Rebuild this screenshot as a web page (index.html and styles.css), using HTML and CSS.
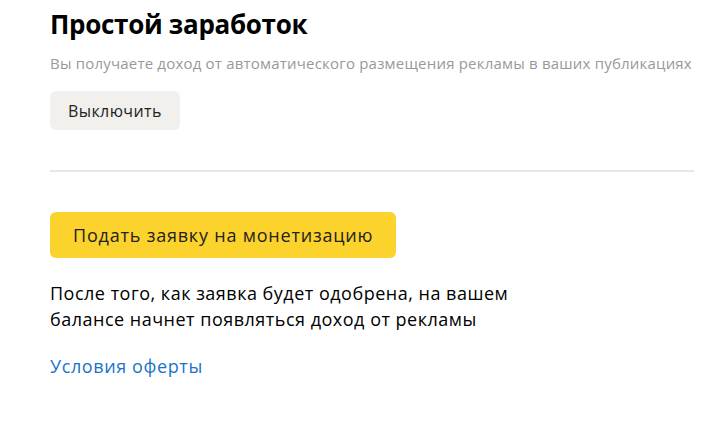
FILE: index.html
```html
<!DOCTYPE html>
<html>
    <head>
        <title>Простой заработок</title>
        <link rel="stylesheet" href="styles.css">
    </head>
    <body>
        <div class="page">
            <h1>Простой заработок</h1>
            <p class="hint">Вы получаете доход от автоматического размещения рекламы в ваших публикациях</p>
            <button class="btn btn-gray">Выключить</button>

            <hr class="divider">

            <button class="btn btn-yellow">Подать заявку на монетизацию</button>
            <p class="note">После того, как заявка будет одобрена, на вашем<br>балансе начнет появляться доход от рекламы</p>
            <a class="link" href="#">Условия оферты</a>
        </div>
    </body>
</html>
```

FILE: styles.css
```css
body { margin: 0; background: #fff; font-family: "Open Sans", "Noto Sans", Arial, sans-serif; color: #000; }
.page { width: 644px; padding: 0 0 0 50px; }
h1 { margin: 0; padding-top: 6px; font-size: 26px; line-height: 36px; font-weight: 700; letter-spacing: -0.3px; }
.hint { margin: 11px 0 0; font-size: 15px; line-height: 20px; color: #999; letter-spacing: 0.2px; white-space: nowrap; }
.btn { display: block; border: none; border-radius: 6px; font-family: inherit; cursor: pointer; }
.btn-gray { margin-top: 18px; background: #f2f0ed; color: #222; font-size: 16px; letter-spacing: 0.4px; height: 39px; padding: 0 18px; }
.divider { margin: 40px 0 0; border: none; border-top: 2px solid #e8e8e8; }
.btn-yellow { margin-top: 40px; background: #fcd22c; color: #222; font-size: 18px; letter-spacing: 0.8px; height: 46px; padding: 0 23px; }
.note { margin: 22px 0 0; font-size: 18px; line-height: 26px; letter-spacing: 0.5px; }
.link { display: inline-block; margin-top: 22px; font-size: 18px; color: #1a73c9; text-decoration: none; letter-spacing: 0.6px; }
```
